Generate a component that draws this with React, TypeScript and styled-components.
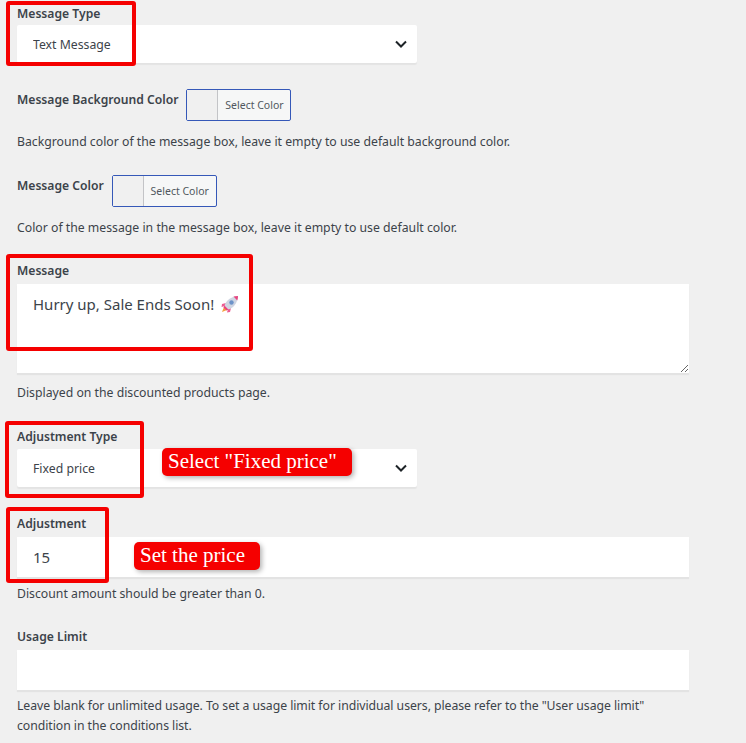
import React from "react";
import styled, { createGlobalStyle } from "styled-components";

const GlobalStyle = createGlobalStyle`
  html, body {
    margin: 0;
    padding: 0;
    background: #f0f0f0;
  }
  * {
    box-sizing: border-box;
  }
`;

const uiFont = `"Noto Sans", "Open Sans", sans-serif`;

const Page = styled.div`
  width: 746px;
  height: 743px;
  overflow: hidden;
  padding-left: 17px;
  font-family: ${uiFont};
  font-size: 12.25px;
  color: #3c434a;
`;

const Field = styled.div<{ $top: number }>`
  position: relative;
  padding-top: ${(p) => p.$top}px;
`;

const Label = styled.label<{ $gap?: number }>`
  display: block;
  font-size: 12.15px;
  font-weight: 600;
  line-height: 18px;
  color: #3c434a;
  margin-bottom: ${(p) => p.$gap ?? 4}px;
`;

const ColorRow = styled.div`
  display: flex;
  align-items: flex-start;
  gap: 8px;
  padding-top: 1px;
  ${Label} {
    margin: 1px 0 0;
  }
`;

const ColorButton = styled.button`
  display: flex;
  align-items: stretch;
  width: 105px;
  height: 32px;
  margin-top: -1px;
  padding: 0;
  background: #f6f7f7;
  border: 1px solid #3558b8;
  border-radius: 2px;
  font-family: ${uiFont};
  font-size: 10.5px;
  color: #50575e;
`;

const Swatch = styled.span`
  width: 31px;
  background: #f0f0f0;
  border-right: 1px solid #c3c4c7;
`;

const ColorText = styled.span`
  flex: 1;
  align-self: center;
  text-align: center;
`;

const Help = styled.p<{ $gap: number; $track?: number }>`
  margin: ${(p) => p.$gap}px 0 0;
  width: 672px;
  font-size: 12.25px;
  line-height: 20px;
  letter-spacing: ${(p) => p.$track ?? 0}px;
  color: #3c434a;
`;

const SelectWrap = styled.div`
  position: relative;
  width: 400px;
  height: 38px;
`;

const Select = styled.select`
  appearance: none;
  display: block;
  width: 100%;
  height: 100%;
  padding: 0 16px;
  background: #fff;
  border: 0;
  border-radius: 2px;
  box-shadow: 0 2px 1px rgba(0, 0, 0, 0.05);
  font-family: ${uiFont};
  font-size: 12.25px;
  color: #3c434a;
`;

const Chevron = styled.svg`
  position: absolute;
  top: 15px;
  right: 10px;
  width: 12px;
  height: 8px;
  pointer-events: none;
`;

const TextAreaWrap = styled.div`
  position: relative;
  width: 672px;
  height: 89px;
`;

const TextArea = styled.textarea`
  display: block;
  width: 100%;
  height: 100%;
  padding: 8px 16px;
  background: #fff;
  border: 0;
  outline: 0;
  box-shadow: 0 2px 1px rgba(0, 0, 0, 0.05);
  font-family: ${uiFont};
  font-size: 15px;
  line-height: 24px;
  color: #3c434a;
`;

const Rocket = styled.svg`
  position: absolute;
  top: 11px;
  left: 204px;
  width: 18px;
  height: 18px;
`;

const Input = styled.input`
  display: block;
  width: 672px;
  height: 40px;
  padding: 0 16px;
  background: #fff;
  border: 0;
  outline: 0;
  box-shadow: 0 2px 1px rgba(0, 0, 0, 0.05);
  font-family: ${uiFont};
  font-size: 15px;
  color: #3c434a;
`;

// red marks somebody drew on top of the screenshot
const Highlight = styled.div<{ $top: number; $left: number; $w: number; $h: number }>`
  position: absolute;
  top: ${(p) => p.$top}px;
  left: ${(p) => p.$left}px;
  width: ${(p) => p.$w}px;
  height: ${(p) => p.$h}px;
  border: 4px solid #f50000;
  border-radius: 3px;
  pointer-events: none;
`;

const Note = styled.div<{ $top: number; $left: number; $w: number }>`
  position: absolute;
  top: ${(p) => p.$top}px;
  left: ${(p) => p.$left}px;
  width: ${(p) => p.$w}px;
  height: 28px;
  padding-left: 6px;
  background: #f50000;
  border-radius: 5px;
  box-shadow: 2px 2px 5px rgba(0, 0, 0, 0.3);
  font-family: "Liberation Serif", serif;
  font-size: 21px;
  line-height: 26px;
  color: #fff;
  white-space: nowrap;
`;

const ChevronIcon = () => (
  <Chevron viewBox="0 0 12 8">
    <polyline points="1,1.5 6,6.5 11,1.5" fill="none" stroke="#1d2327" strokeWidth="2" />
  </Chevron>
);

const RocketIcon = () => (
  <Rocket viewBox="0 0 18 18">
    <path d="M5 8 L1 9 L0.5 12 L4 11 Z" fill="#ec5c92" />
    <path d="M10 13 L9 17 L6 17.5 L7 14 Z" fill="#ec5c92" />
    <path d="M3 12 L1 17 L6 15 Z" fill="#f5a040" />
    <path d="M3.5 10.5 C5 5.5 10 1.5 17 1 C16.5 8 12.5 13 7.5 14.5 Z" fill="#cfd5e2" />
    <path d="M12.5 1.6 C14 1.2 15.5 1 17 1 C17 2.5 16.7 4 16.3 5.5 Z" fill="#e8457f" />
    <circle cx="10.5" cy="7.5" r="2.2" fill="#6d93c9" />
    <path d="M3.5 10.5 L7.5 14.5 L5.5 15.5 L2.5 12.5 Z" fill="#e8457f" />
  </Rocket>
);

const SelectField = ({ value }: { value: string }) => (
  <SelectWrap>
    <Select defaultValue={value}>
      <option>{value}</option>
    </Select>
    <ChevronIcon />
  </SelectWrap>
);

const ColorPicker = () => (
  <ColorButton type="button">
    <Swatch />
    <ColorText>Select Color</ColorText>
  </ColorButton>
);

export default function App() {
  return (
    <Page>
      <GlobalStyle />

      <Field $top={5}>
        <Label $gap={2}>Message Type</Label>
        <SelectField value="Text Message" />
        <Highlight $top={1} $left={-11} $w={130} $h={65} />
      </Field>

      <Field $top={26}>
        <ColorRow>
          <Label>Message Background Color</Label>
          <ColorPicker />
        </ColorRow>
        <Help $gap={11}>Background color of the message box, leave it empty to use default background color.</Help>
      </Field>

      <Field $top={23}>
        <ColorRow>
          <Label>Message Color</Label>
          <ColorPicker />
        </ColorRow>
        <Help $gap={11}>Color of the message in the message box, leave it empty to use default color.</Help>
      </Field>

      <Field $top={24}>
        <Label>Message</Label>
        <TextAreaWrap>
          <TextArea readOnly defaultValue="Hurry up, Sale Ends Soon!" />
          <RocketIcon />
        </TextAreaWrap>
        <Help $gap={10}>Displayed on the discounted products page.</Help>
        <Highlight $top={16} $left={-11} $w={247} $h={97} />
      </Field>

      <Field $top={25}>
        <Label $gap={3}>Adjustment Type</Label>
        <SelectField value="Fixed price" />
        <Highlight $top={18} $left={-12} $w={139} $h={77} />
        <Note $top={45} $left={145} $w={190}>Select "Fixed price"</Note>
      </Field>

      <Field $top={28}>
        <Label>Adjustment</Label>
        <Input readOnly defaultValue="15" />
        <Help $gap={7}>Discount amount should be greater than 0.</Help>
        <Highlight $top={20} $left={-11} $w={103} $h={76} />
        <Note $top={55} $left={117} $w={126}>Set the price</Note>
      </Field>

      <Field $top={24}>
        <Label>Usage Limit</Label>
        <Input readOnly />
        <Help $gap={6} $track={-0.05}>
          Leave blank for unlimited usage. To set a usage limit for individual users, please refer to the "User usage
          limit" condition in the conditions list.
        </Help>
      </Field>
    </Page>
  );
}
